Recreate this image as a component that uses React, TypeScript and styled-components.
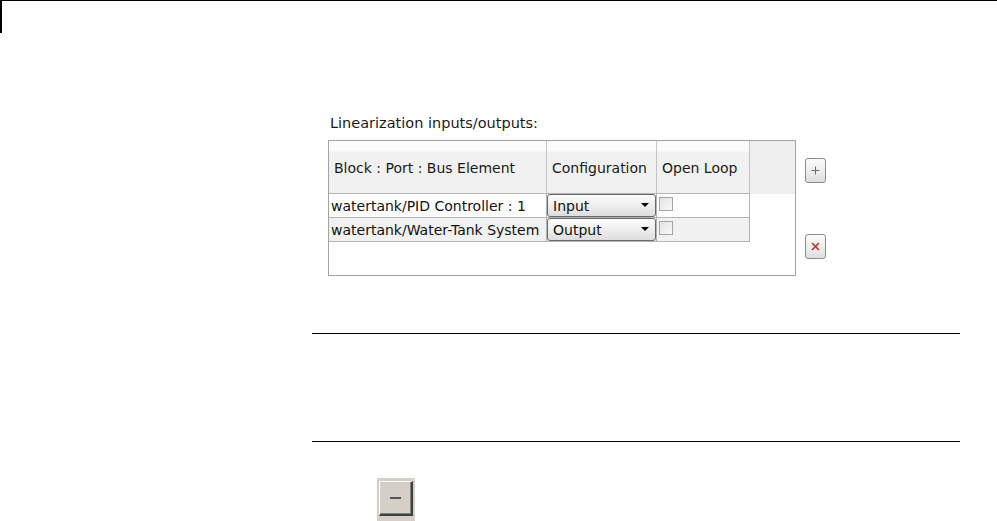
import { Fragment } from "react";
import type { FC } from "react";
import { styled, createGlobalStyle } from "styled-components";

const GlobalStyle = createGlobalStyle`
  html, body {
    margin: 0;
    padding: 0;
    background: #fff;
  }
  body {
    font-family: "DejaVu Sans", Verdana, sans-serif;
    color: #000;
  }
`;

const Page = styled.div`
  width: 997px;
  height: 521px;
  overflow: hidden;
  display: flex;
  flex-direction: column;
`;

const TopRule = styled.div`
  height: 32px;
  border-top: 1px solid #000;
  border-left: 2px solid #000;
  flex-shrink: 0;
`;

const Column = styled.div`
  margin-left: 312px;
  width: 648px;
  display: flex;
  flex-direction: column;
`;

const Panel = styled.section`
  margin-left: 16px;
  margin-top: 82px;
  display: flex;
  flex-direction: column;
`;

const Label = styled.div`
  font-size: 14.5px;
  line-height: 17px;
  color: #1a1a1a;
  margin-left: 2px;
  margin-bottom: 8px;
`;

const TableRow = styled.div`
  display: flex;
  gap: 9px;
`;

const TableBox = styled.div`
  width: 466px;
  height: 134px;
  border: 1px solid #a3a3a3;
  background: #fff;
  display: grid;
  grid-template-columns: 218px 110px 93px 45px;
  grid-template-rows: 53px 24px 24px;
  align-content: start;
`;

const HeadCell = styled.div<{ $filler?: boolean }>`
  display: flex;
  align-items: center;
  padding-left: 5px;
  font-size: 14px;
  color: #1a1a1a;
  white-space: nowrap;
  background: ${({ $filler }) =>
    $filler
      ? "#efefef"
      : "linear-gradient(to bottom, #fbfbfb 0px, #fbfbfb 10px, #f1f1f1 11px, #f1f1f1 100%)"};
  border-right: ${({ $filler }) => ($filler ? "none" : "1px solid #c4c4c4")};
  border-bottom: ${({ $filler }) => ($filler ? "none" : "1px solid #b4b4b4")};
  padding-top: 1px;
`;

const Cell = styled.div<{ $shaded?: boolean; $pad?: boolean }>`
  display: flex;
  align-items: center;
  padding-left: ${({ $pad }) => ($pad ? "2px" : "0")};
  font-size: 14px;
  color: #111;
  white-space: nowrap;
  background: ${({ $shaded }) => ($shaded ? "#f1f1f1" : "#fff")};
  border-right: 1px solid #b4b4b4;
  border-bottom: 1px solid #b4b4b4;
  position: relative;
`;

const Gap = styled.div``;

const Dropdown = styled.div`
  position: absolute;
  left: 0;
  top: 0;
  width: 109px;
  height: 23px;
  border: 1px solid #6a6a6a;
  border-radius: 3px;
  background: linear-gradient(to bottom, #fdfdfd 0%, #efefef 50%, #dcdcdc 100%);
  display: flex;
  align-items: center;
  justify-content: space-between;
  padding: 1px 6px 0 5px;
  box-sizing: border-box;
  font-size: 14px;
  color: #111;
  z-index: 1;
`;

const Arrow = styled.span`
  width: 0;
  height: 0;
  border-left: 4px solid transparent;
  border-right: 4px solid transparent;
  border-top: 4px solid #000;
  margin-top: -2px;
`;

const Checkbox = styled.span`
  width: 12px;
  height: 12px;
  margin-left: 2px;
  margin-top: -4px;
  border: 1px solid #a5a5a5;
  background: linear-gradient(135deg, #e4e4e4 0%, #f8f8f8 100%);
`;

const SideButtons = styled.div`
  display: flex;
  flex-direction: column;
  padding-top: 18px;
  gap: 51px;
`;

const IconButton = styled.button`
  width: 21px;
  height: 25px;
  padding: 0;
  border: 1px solid #8c8c8c;
  border-radius: 3px;
  background: linear-gradient(to bottom, #fbfbfb 0%, #ececec 60%, #dedede 100%);
  display: flex;
  align-items: center;
  justify-content: center;
`;

const Separator = styled.hr<{ $top: number }>`
  margin: ${({ $top }) => $top}px 0 0 0;
  border: none;
  border-top: 1px solid #000;
  height: 0;
  width: 648px;
`;

const MinusWell = styled.div`
  margin-top: 36px;
  margin-left: 65px;
  width: 38px;
  height: 44px;
  background: #d4d0c8;
  display: flex;
  padding: 3px 0 0 2px;
  box-sizing: border-box;
`;

const MinusButton = styled.div`
  width: 34px;
  height: 35px;
  box-sizing: border-box;
  border-top: 1px solid #fff;
  border-left: 1px solid #fff;
  border-right: 2px solid #404040;
  border-bottom: 2px solid #404040;
  box-shadow: inset -1px -1px 0 #808080;
  background: #d4d0c8;
  display: flex;
  align-items: center;
  justify-content: center;
`;

const MinusBar = styled.span`
  width: 11px;
  height: 2px;
  background: #555;
  margin-right: 1px;
`;

interface Signal {
  block: string;
  config: string;
}

const signals: Signal[] = [
  { block: "watertank/PID Controller : 1", config: "Input" },
  { block: "watertank/Water-Tank System", config: "Output" },
];

const PlusIcon: FC = () => (
  <svg width="9" height="9" viewBox="0 0 9 9">
    <path d="M4.5 0.5v8M0.5 4.5h8" stroke="#6a6a6a" strokeWidth="1" />
  </svg>
);

const CrossIcon: FC = () => (
  <svg width="9" height="9" viewBox="0 0 9 9">
    <path d="M1 1l7 7M8 1l-7 7" stroke="#c0302a" strokeWidth="1.6" />
  </svg>
);

const App: FC = () => {
  return (
    <Page>
      <GlobalStyle />
      <TopRule />
      <Column>
        <Panel>
          <Label>Linearization inputs/outputs:</Label>
          <TableRow>
            <TableBox>
              <HeadCell>Block : Port : Bus Element</HeadCell>
              <HeadCell>Configuration</HeadCell>
              <HeadCell>Open Loop</HeadCell>
              <HeadCell $filler />
              {signals.map((s, i) => (
                <Fragment key={s.block}>
                  <Cell $shaded={i % 2 === 1} $pad>
                    {s.block}
                  </Cell>
                  <Cell $shaded={i % 2 === 1}>
                    <Dropdown>
                      {s.config}
                      <Arrow />
                    </Dropdown>
                  </Cell>
                  <Cell $shaded={i % 2 === 1}>
                    <Checkbox />
                  </Cell>
                  <Gap />
                </Fragment>
              ))}
            </TableBox>
            <SideButtons>
              <IconButton aria-label="Add">
                <PlusIcon />
              </IconButton>
              <IconButton aria-label="Remove">
                <CrossIcon />
              </IconButton>
            </SideButtons>
          </TableRow>
        </Panel>
        <Separator $top={57} />
        <Separator $top={107} />
        <MinusWell>
          <MinusButton>
            <MinusBar />
          </MinusButton>
        </MinusWell>
      </Column>
    </Page>
  );
};

export default App;
